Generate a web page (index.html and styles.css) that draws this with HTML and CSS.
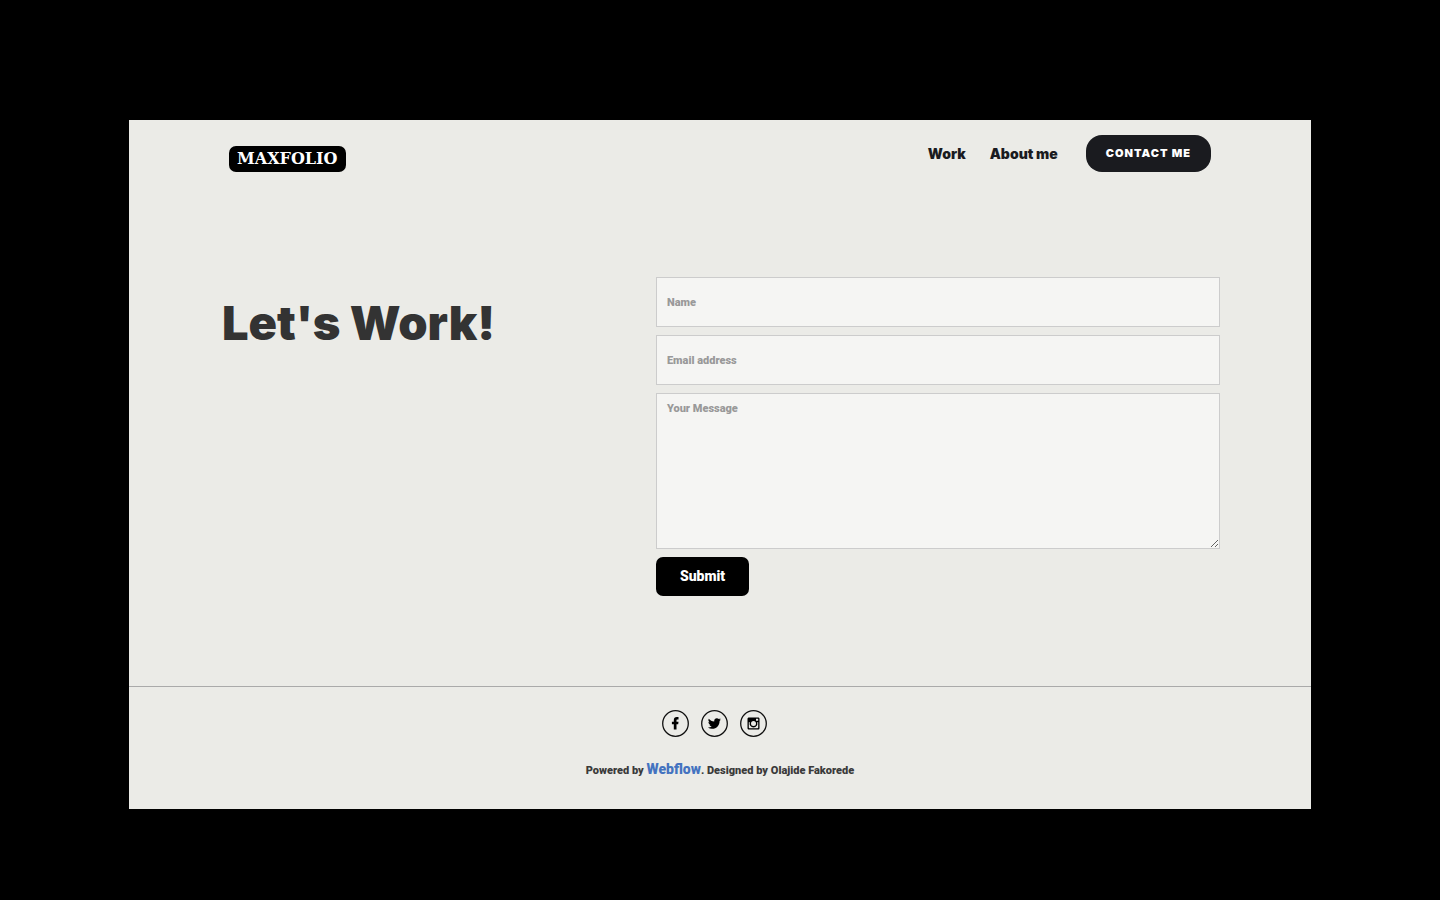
FILE: index.html
```html
<!DOCTYPE html>
<html lang="en">
<head>
<meta charset="utf-8">
<meta name="viewport" content="width=device-width, initial-scale=1">
<title>Maxfolio</title>
<link rel="stylesheet" href="styles.css">
</head>
<body>
<div class="page">
  <header class="header">
    <a class="logo" href="#">MAXFOLIO</a>
    <nav class="nav">
      <a class="nav-link" href="#">Work</a>
      <a class="nav-link" href="#">About me</a>
      <a class="nav-button" href="#">CONTACT ME</a>
    </nav>
  </header>
  <main class="contact">
    <h1 class="title">Let's Work!</h1>
    <form class="form">
      <input class="field" type="text" placeholder="Name" aria-label="Name">
      <input class="field" type="email" placeholder="Email address" aria-label="Email address">
      <textarea class="field message" placeholder="Your Message" aria-label="Your Message"></textarea>
      <button class="submit" type="submit">Submit</button>
    </form>
  </main>
  <footer class="footer">
    <div class="social">
      <a class="social-link" href="#" aria-label="Facebook">
        <svg class="icon" viewBox="0 0 27 27"><circle class="ring" cx="13.5" cy="13.5" r="12.8"/><path d="M11.800 19.500V14.200h-1.900v-2.400h1.900v-1.600c0-2.100 1.100-3.200 3-3.200h1.700v2.400h-1.100c-.7 0-.9.300-.9.900v1.500h2l-.3 2.400h-1.700v5.300z"/></svg>
      </a>
      <a class="social-link" href="#" aria-label="Twitter">
        <svg class="icon" viewBox="0 0 27 27"><circle class="ring" cx="13.500" cy="13.500" r="12.800"/><path d="M19.900 9.500c-.5.200-1 .4-1.500.4.600-.3 1-.8 1.100-1.400-.5.300-1.100.5-1.700.6a2.700 2.700 0 0 0-4.600 2.400c-2.200-.1-4.100-1.100-5.400-2.700-.8 1.300-.3 2.800.8 3.500-.4 0-.8-.1-1.200-.3 0 1.300.9 2.400 2.100 2.600-.4.100-.8.100-1.200 0 .3 1.100 1.300 1.800 2.500 1.900-1.100.8-2.500 1.200-3.900 1.100 1.200.8 2.600 1.200 4.100 1.200 4.900 0 7.600-4 7.600-7.900.5-.4 1-.9 1.300-1.400z"/></svg>
      </a>
      <a class="social-link" href="#" aria-label="Instagram">
        <svg class="icon" viewBox="0 0 27 27"><circle class="ring" cx="13.500" cy="13.500" r="12.800"/><path fill-rule="evenodd" d="M9 7.500h9c1 0 1.500.5 1.500 1.500v9c0 1-.5 1.500-1.500 1.500H9c-1 0-1.500-.5-1.500-1.500V9c0-1 .5-1.500 1.500-1.500zM8.800 12.200v5.400c0 .5.200.7.700.7h8c.5 0 .7-.2.700-.7v-5.400h-1.100a3.900 3.900 0 1 1-7.200 0zM16 8.700v2.100h2.200V8.700zM13.500 11a2.500 2.500 0 1 0 0 5 2.500 2.500 0 0 0 0-5z"/></svg>
      </a>
    </div>
    <p class="credit">Powered by <a class="credit-link" href="#">Webflow</a>. Designed by Olajide Fakorede</p>
  </footer>
</div>
</body>
</html>
```
FILE: styles.css
```css
* {
  box-sizing: border-box;
}

body {
  margin: 0;
  padding: 120px 129px 90px;
  background: #000;
  color: #3a3a3a;
  font-family: Roboto, "Liberation Sans", sans-serif;
  font-weight: 900;
}

a {
  color: inherit;
  text-decoration: none;
}

.page {
  background: #ebebe7;
}

.header {
  display: flex;
  align-items: flex-start;
  justify-content: space-between;
  padding: 15px 100px 0;
}

.logo {
  margin-top: 11px;
  padding: 0 8px;
  border-radius: 7px;
  background: #000;
  color: #fff;
  font: bold 16px/26px "DejaVu Serif", serif;
}

.nav {
  display: flex;
  align-items: center;
  color: #1a1b1f;
  font-family: Inter, "Liberation Sans", sans-serif;
}

.nav-link {
  margin-right: 24px;
  font-size: 14px;
  line-height: 24px;
}

.nav-button {
  margin-left: 4px;
  padding: 0 20px;
  border-radius: 16px;
  background: #1a1b1f;
  color: #fff;
  font-size: 11px;
  line-height: 37px;
  letter-spacing: 1px;
}

.contact {
  display: grid;
  grid-template-columns: 10fr 13fr;
  padding: 105px 91px 90px 93px;
}

.title {
  margin: 15px 0 0;
  color: #333;
  font-family: Inter, "Liberation Sans", sans-serif;
  font-size: 47px;
  font-weight: 900;
  line-height: 62px;
}

.form {
  display: flex;
  flex-direction: column;
  align-items: flex-start;
  gap: 8px;
}

.field {
  display: block;
  width: 100%;
  height: 50px;
  padding: 8px 10px;
  border: 1px solid #ccc;
  border-radius: 0;
  background: #f5f5f3;
  color: #333;
  font: 900 11px/14px Roboto, "Liberation Sans", sans-serif;
}

.field::placeholder {
  color: #999;
  opacity: 1;
}

.message {
  height: 156px;
}

.submit {
  padding: 0 24px;
  border: 0;
  border-radius: 7px;
  background: #000;
  color: #fff;
  font: 900 14px/39px Roboto, "Liberation Sans", sans-serif;
}

.footer {
  padding: 23px 20px 26px;
  border-top: 1px solid #aaa;
  text-align: center;
}

.social {
  display: flex;
  justify-content: center;
}

.social-link {
  margin-right: 12px;
}

.icon {
  display: block;
  width: 27px;
  height: 27px;
}

.ring {
  fill: none;
  stroke: #111;
  stroke-width: 1.3;
}

.credit {
  margin: 20px 0 0;
  font-size: 11px;
  line-height: 24px;
}

.credit-link {
  color: #4473c0;
  font-size: 14px;
}
```
